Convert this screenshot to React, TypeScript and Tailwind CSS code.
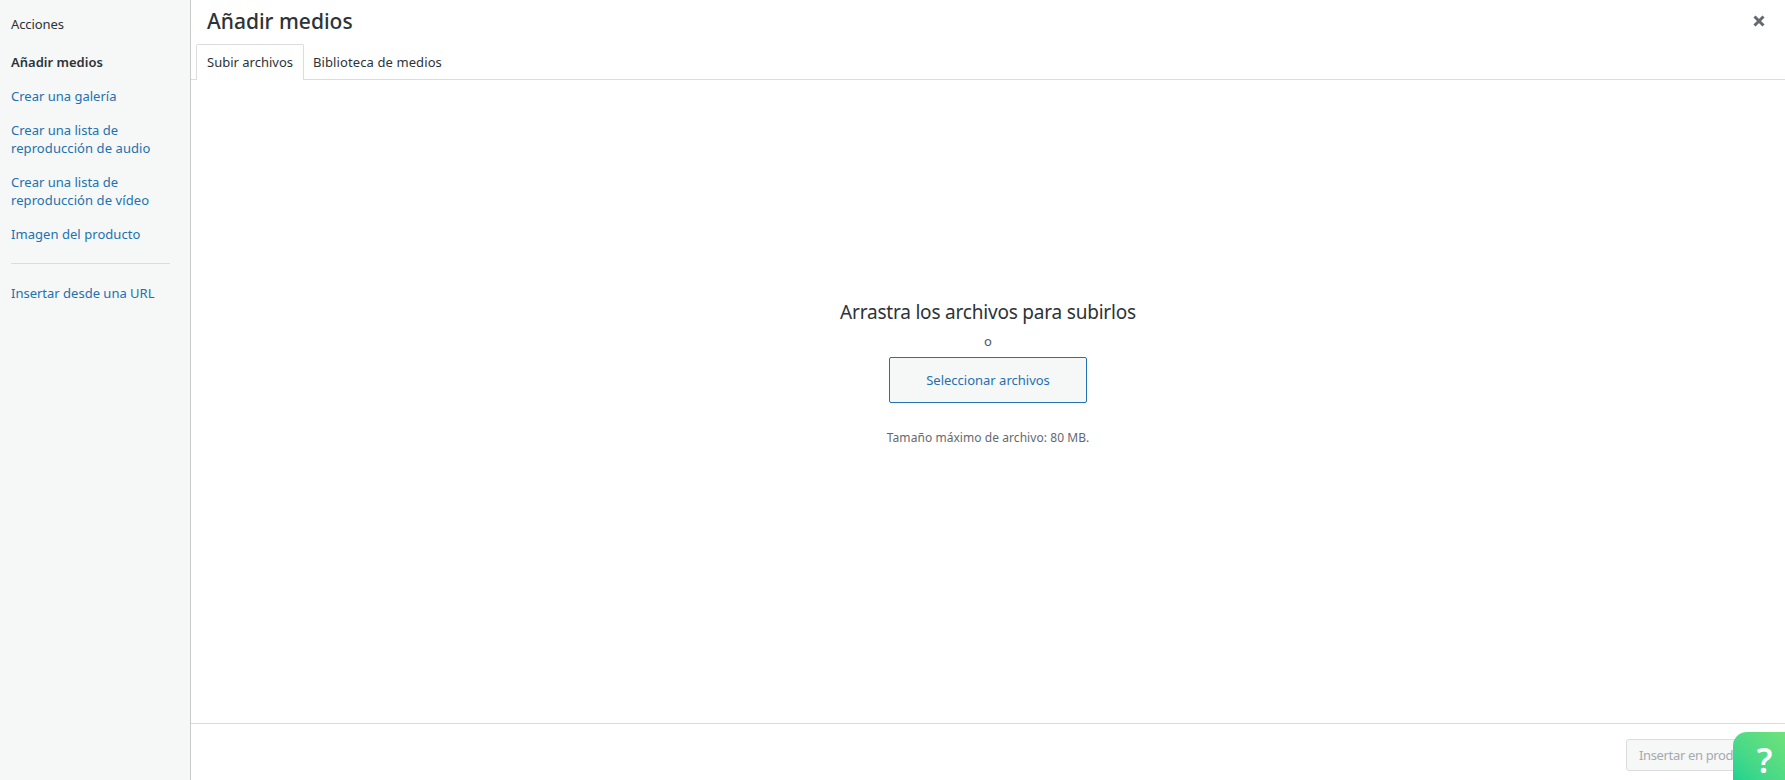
export default function App() {
  return (
    <div className="relative flex h-screen w-full overflow-hidden bg-white font-['Noto_Sans',sans-serif] text-[13px] leading-[18px] text-[#2c3338]">
      <aside className="flex w-[191px] shrink-0 flex-col border-r border-[#c8caca] bg-[#f6f7f7] pl-[11px] pr-5 pt-[15px]">
        <h2 className="text-[13px] leading-[18px] tracking-[-0.1px] text-[#2c3338]">Acciones</h2>
        <ul className="mt-[20px] flex flex-col gap-4 text-[#2271b1]">
          <li className="font-semibold text-[#2c3338]">Añadir medios</li>
          <li>Crear una galería</li>
          <li>Crear una lista de<br /><span className="tracking-[0.08px]">reproducción de audio</span></li>
          <li>Crear una lista de<br /><span className="tracking-[0.08px]">reproducción de vídeo</span></li>
          <li className="tracking-[0.05px]">Imagen del producto</li>
        </ul>
        <div className="mt-[20px] h-px w-[159px] bg-[#dcdcde]" />
        <div className="mt-[20px] text-[#2271b1]">Insertar desde una URL</div>
      </aside>
      <main className="flex min-w-0 flex-1 flex-col">
        <header className="flex h-[44px] items-start justify-between pl-4 pr-[20px]">
          <h1 className="pt-[5px] text-[21px] font-medium leading-[32px] text-[#2c3338]">Añadir medios</h1>
          <svg viewBox="0 0 12 12" className="mt-[15px] h-3 w-3" fill="none" stroke="#646970" strokeWidth="3">
            <path d="M1.5 1.5l9 9M10.5 1.5l-9 9" />
          </svg>
        </header>
        <nav className="flex h-[36px] items-start border-b border-[#dcdcde] pl-[5px]">
          <div className="h-[36px] rounded-t-[2px] border border-b-0 border-[#dcdcde] bg-white px-[10px] pt-[8px] text-[#2c3338]">Subir archivos</div>
          <div className="pl-[9px] pt-[9px] tracking-[0.1px] text-[#2c3338]">Biblioteca de medios</div>
        </nav>
        <section className="flex flex-1 flex-col items-center pt-[219px]">
          <p className="text-[19px] font-normal leading-[26px] tracking-[-0.2px] text-[#2c3338]">Arrastra los archivos para subirlos</p>
          <p className="mt-[7px] text-[#50575e]">o</p>
          <button className="mt-[7px] h-[46px] w-[198px] rounded-[2px] border border-[#2271b1] bg-[#f6f7f7] text-[#2271b1]">Seleccionar archivos</button>
          <p className="mt-[26px] text-[12px] leading-[18px] tracking-[0.06px] text-[#646970]">Tamaño máximo de archivo: 80 MB.</p>
        </section>
        <footer className="flex h-[57px] justify-end border-t border-[#dcdcde] pr-4 pt-[15px]">
          <button className="h-[32px] w-[143px] whitespace-nowrap rounded-[3px] border border-[#dcdcde] bg-[#f6f7f7] pl-3 text-left tracking-[-0.35px] text-[#a7aaad]">Insertar en producto</button>
        </footer>
      </main>
      <div className="absolute bottom-0 right-0 flex h-[48px] w-[52px] items-center justify-center rounded-tl-[14px] bg-gradient-to-tr from-[#19d38f] to-[#6fe27a] pl-[11px] pt-[7px] text-[34px] font-semibold leading-none text-white">?</div>
    </div>
  );
}
